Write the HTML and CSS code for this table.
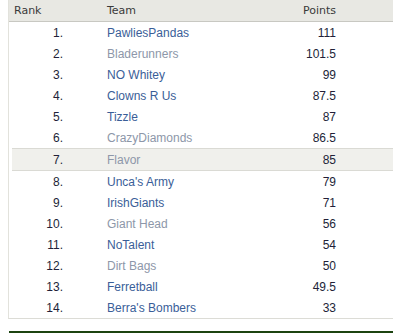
FILE: index.html
```html
<!DOCTYPE html>
<html>
<head>
<meta charset="utf-8">
<link rel="stylesheet" href="styles.css">
</head>
<body>
<div class="standings">
  <div class="row head">
    <div class="rank">Rank</div>
    <div class="team">Team</div>
    <div class="pts">Points</div>
  </div>
  <div class="body">
    <div class="row"><div class="rank">1.</div><div class="team"><a class="blue">PawliesPandas</a></div><div class="pts">111</div></div>
    <div class="row"><div class="rank">2.</div><div class="team"><a class="grey">Bladerunners</a></div><div class="pts">101.5</div></div>
    <div class="row"><div class="rank">3.</div><div class="team"><a class="blue">NO Whitey</a></div><div class="pts">99</div></div>
    <div class="row"><div class="rank">4.</div><div class="team"><a class="blue">Clowns R Us</a></div><div class="pts">87.5</div></div>
    <div class="row"><div class="rank">5.</div><div class="team"><a class="blue">Tizzle</a></div><div class="pts">87</div></div>
    <div class="row"><div class="rank">6.</div><div class="team"><a class="grey">CrazyDiamonds</a></div><div class="pts">86.5</div></div>
    <div class="row mine"><div class="rank">7.</div><div class="team"><a class="grey">Flavor</a></div><div class="pts">85</div></div>
    <div class="row"><div class="rank">8.</div><div class="team"><a class="blue">Unca's Army</a></div><div class="pts">79</div></div>
    <div class="row"><div class="rank">9.</div><div class="team"><a class="blue">IrishGiants</a></div><div class="pts">71</div></div>
    <div class="row"><div class="rank">10.</div><div class="team"><a class="grey">Giant Head</a></div><div class="pts">56</div></div>
    <div class="row"><div class="rank">11.</div><div class="team"><a class="blue">NoTalent</a></div><div class="pts">54</div></div>
    <div class="row"><div class="rank">12.</div><div class="team"><a class="grey">Dirt Bags</a></div><div class="pts">50</div></div>
    <div class="row"><div class="rank">13.</div><div class="team"><a class="blue">Ferretball</a></div><div class="pts">49.5</div></div>
    <div class="row"><div class="rank">14.</div><div class="team"><a class="blue">Berra's Bombers</a></div><div class="pts">33</div></div>
  </div>
</div>
<div class="footer-bar"></div>
</body>
</html>
```
FILE: styles.css
```css
html, body {
  margin: 0;
  padding: 0;
  background: #ffffff;
  overflow: hidden;
}
body {
  width: 393px;
  height: 333px;
  padding-left: 8px;
  box-sizing: border-box;
  font-family: Arial, "Liberation Sans", sans-serif;
}
.standings {
  border-left: 1px solid #e2e2dc;
  border-bottom: 1px solid #dcdcd6;
}
.row {
  display: grid;
  grid-template-columns: 60px 221px 52px 1fr;
  height: 21px;
  align-items: center;
  font-size: 12px;
  color: #221f38;
}
.row .rank {
  text-align: right;
  padding-right: 6px;
}
.row .team {
  padding-left: 38px;
}
.row .pts {
  text-align: right;
  padding-right: 6px;
}
.head {
  background: #e8e8e3;
  border-bottom: 1px solid #c8c8c2;
  font-family: "DejaVu Sans", Verdana, sans-serif;
  font-size: 11px;
  color: #3a3a3a;
}
.head .rank {
  text-align: left;
  padding-left: 5px;
  padding-right: 0;
}
.mine {
  background: #f0f0ec;
  border-top: 1px solid #dadad4;
  border-bottom: 1px solid #dadad4;
  margin-left: 3px;
  grid-template-columns: 57px 221px 52px 1fr;
}
.blue { color: #3a5e98; }
.grey { color: #8d97a9; }
.footer-bar {
  margin-top: 12px;
  height: 3px;
  margin-left: 1px;
  background: #1c4410;
}
```
